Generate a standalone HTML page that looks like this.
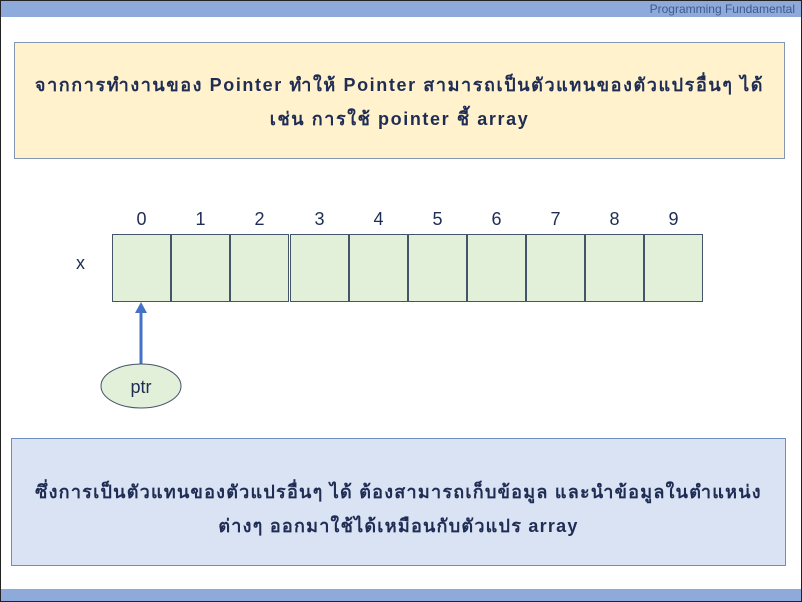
<!DOCTYPE html>
<html><head><meta charset="utf-8"><style>
html,body{margin:0;padding:0}
body{width:802px;height:602px;position:relative;overflow:hidden;background:#fff;font-family:"Liberation Sans","DejaVu Sans",sans-serif;color:#1f2d55}
.frame{position:absolute;left:0;top:0;width:800px;height:600px;border:1px solid #222;}
.top{position:absolute;left:1px;top:1px;width:800px;height:16px;background:#8eaadb;}
.top span{position:absolute;right:6px;top:1px;font-size:12px;color:#3e5a8a}
.bot{position:absolute;left:1px;top:589px;width:800px;height:12px;background:#8eaadb}
.box{position:absolute;box-sizing:border-box;text-align:center;font-weight:bold;font-size:18px;line-height:34px}
.y{left:14px;top:42px;width:771px;height:117px;background:#fff2cc;border:1px solid #8497b0;padding-top:25px;letter-spacing:1.6px}
.b{left:11px;top:438px;width:775px;height:128px;background:#dae3f3;border:1px solid #6f8cc3;padding-top:36px;letter-spacing:1.25px}
.cell{position:absolute;top:234px;width:57px;height:66px;background:#e2efd9;border:1px solid #44546a}
.n{position:absolute;top:209px;width:59px;text-align:center;font-size:18px}
</style></head><body>
<div class="frame"></div>
<div class="top"><span>Programming Fundamental</span></div>
<div class="box y">จากการทำงานของ Pointer ทำให้ Pointer สามารถเป็นตัวแทนของตัวแปรอื่นๆ ได้<br>เช่น การใช้ pointer ชี้ array</div>
<div style="position:absolute;left:76px;top:253px;font-size:18px">x</div>
<div class="cell" style="left:112px"></div><div class="n" style="left:112px">0</div>
<div class="cell" style="left:171px"></div><div class="n" style="left:171px">1</div>
<div class="cell" style="left:230px"></div><div class="n" style="left:230px">2</div>
<div class="cell" style="left:290px"></div><div class="n" style="left:290px">3</div>
<div class="cell" style="left:349px"></div><div class="n" style="left:349px">4</div>
<div class="cell" style="left:408px"></div><div class="n" style="left:408px">5</div>
<div class="cell" style="left:467px"></div><div class="n" style="left:467px">6</div>
<div class="cell" style="left:526px"></div><div class="n" style="left:526px">7</div>
<div class="cell" style="left:585px"></div><div class="n" style="left:585px">8</div>
<div class="cell" style="left:644px"></div><div class="n" style="left:644px">9</div>
<svg style="position:absolute;left:0;top:0" width="802" height="602">
<line x1="141" y1="365" x2="141" y2="312" stroke="#4472c4" stroke-width="3"/>
<polygon points="141,302 135,313 147,313" fill="#4472c4"/>
<ellipse cx="141" cy="386" rx="40" ry="22" fill="#e2efd9" stroke="#44546a" stroke-width="1"/>
<text x="141" y="393" text-anchor="middle" font-family="Liberation Sans,sans-serif" font-size="18" fill="#1f2d55">ptr</text>
</svg>
<div class="box b">ซึ่งการเป็นตัวแทนของตัวแปรอื่นๆ ได้ ต้องสามารถเก็บข้อมูล และนำข้อมูลในตำแหน่ง<br>ต่างๆ ออกมาใช้ได้เหมือนกับตัวแปร array</div>
<div class="bot"></div>
</body></html>
